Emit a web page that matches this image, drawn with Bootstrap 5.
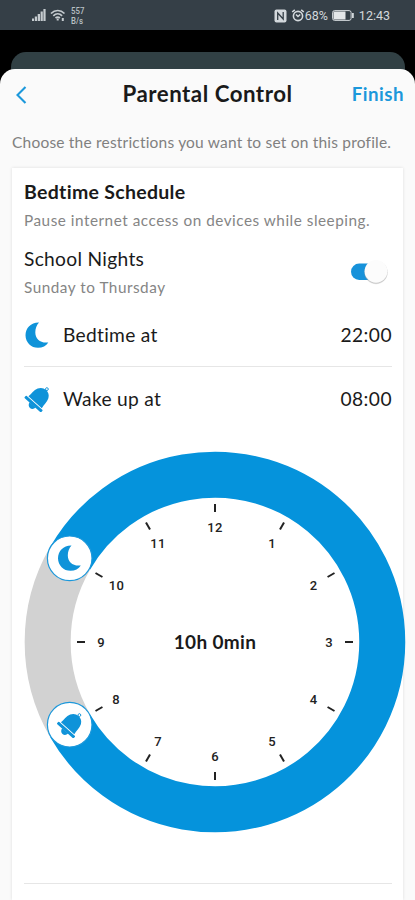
<!DOCTYPE html>
<html lang="en">
<head>
<meta charset="utf-8">
<meta name="viewport" content="width=device-width, initial-scale=1">
<title>Parental Control</title>
<link href="https://cdn.jsdelivr.net/npm/bootstrap@5.3.0/dist/css/bootstrap.min.css" rel="stylesheet">
<style>
  body { background: #000; font-family: Lato, "Open Sans", sans-serif; color: #1a1a1a; height: 900px; line-height: 1; }
  svg { display: block; flex: none; }
  .status-bar { height: 30px; background: #353f47; color: #d3d8dc; font: 12.5px Roboto, sans-serif; padding: 1px 25px 0 32px; }
  .net-rate { font: 500 8.5px/10px Roboto, sans-serif; margin-left: 5px; color: #b9c0c4; transform: scaleX(.92); transform-origin: left; }
  .sheet-behind { height: 32px; margin: 22px 10px 0 11px; background: #314044; border-radius: 15px 15px 0 0; }
  .sheet { height: 831px; margin-top: -15px; background: #fafafa; border-radius: 15px 15px 0 0; position: relative; }
  .sheet-head { height: 51px; padding: 0 11px 0 16px; }
  .sheet-title { font-size: 22.3px; font-weight: 700; letter-spacing: .5px; margin-left: -5px; }
  .finish { color: #1c98db; font-size: 18.7px; font-weight: 700; letter-spacing: .5px; }
  .side { width: 64px; }
  .intro { height: 48px; padding: 14px 0 0 12px; font-size: 15.5px; line-height: 16px; letter-spacing: .2px; color: #808080; white-space: nowrap; }
  .schedule { height: 732px; margin: 0 12px; padding: 12px 11px 0 12px; background: #fff; box-shadow: 0 0 3px rgba(0,0,0,.12); }
  .sched-title { font-size: 19.5px; line-height: 24px; font-weight: 700; letter-spacing: .3px; }
  .muted { color: #858585; font-size: 15.3px; letter-spacing: .52px; line-height: 18px; white-space: nowrap; }
  .pause { padding-top: 7px; }
  .nights { padding: 18px 0 8px; }
  .nights .toggle { margin-right: 4px; }
  .days { padding-top: 7px; }
  .label { font-size: 19.2px; letter-spacing: .3px; line-height: 24px; }
  .time { letter-spacing: .45px; }
  .toggle { width: 37px; height: 26px; overflow: visible; }
  .time-row { height: 63px; }
  .time-row .label:nth-child(2) { margin-left: 13px; }
  .line-b { border-bottom: 1px solid #e6e6e6; }
  .dial { width: 382px; height: 382px; margin-top: 21px; overflow: visible; }
  .hours text { font: 500 13px Roboto, sans-serif; text-anchor: middle; fill: #222; letter-spacing: .3px; }
  .total { font: 700 19px Lato, sans-serif; text-anchor: middle; fill: #1a1a1a; letter-spacing: .35px; }
  .end-line { height: 51px; }
</style>
</head>
<body class="overflow-hidden">
<svg width="0" height="0" class="position-absolute">
  <defs>
    <symbol id="moon" viewBox="0 0 24 26"><path d="M14 .500C6 .300.500 6 .500 13.200.500 20.300 6 25.800 13 25.800c4.500 0 8.200-2 10.300-5.400C15.500 21.500 10.300 16.800 10.300 10.200c0-3.800 1.400-7 3.700-9.700z" fill="#0f93d9"/></symbol>
    <symbol id="bell" viewBox="0 0 26 26"><g transform="translate(1 0) rotate(42 13 13)" fill="#0f93d9">
      <circle cx="13" cy="-.300" r="1.400" fill="none" stroke="#0f93d9" stroke-width=".900"/>
      <path d="M4 17.300C5 13.500 3.900 9.500 5.800 5.500 7.200 2.500 9.800 1 13 1s5.800 1.500 7.200 4.500c1.900 4 .8 8 1.800 11.800z"/>
      <rect x="1.800" y="18.200" width="22.400" height="3" rx=".800"/>
      <path d="M9 21h8c-.3 2.500-1.900 4-4 4s-3.700-1.500-4-4z"/>
    </g></symbol>
  </defs>
</svg>

<div class="status-bar d-flex align-items-center justify-content-between">
  <div class="d-flex align-items-center">
    <svg width="14" height="13" viewBox="0 0 14 13" fill="#c5cbcf"><path d="M0 9.500h2V12H0zM2.800 7.500H5V12H2.800zM5.700 5H8v7H5.700zM8.600 2.500h2.200V12H8.600zM11.400 0h2.200v12h-2.200z"/></svg>
    <svg width="16" height="13" viewBox="0 0 16 13" fill="none" stroke="#c5cbcf" stroke-width="1.700" class="ms-1"><path d="M1 4.500C5 .500 10.500.500 14.500 4.500M3.300 6.800c2.600-2.500 6.200-2.500 8.800 0M5.500 9c1.400-1.200 3-1.200 4.400 0"/><path d="M7.700 9.500v2M12.800 9v3" stroke-width="2"/></svg>
    <div class="net-rate">557<br>B/s</div>
  </div>
  <div class="d-flex align-items-center">
    <svg width="13" height="14" viewBox="0 0 13 14"><rect x=".500" y=".500" width="12" height="13" rx="2" fill="#d3d8dc"/><path d="M3.700 11V4l5.500 6V3" fill="none" stroke="#353f47" stroke-width="1.300"/></svg>
    <svg width="14" height="13" viewBox="0 0 13 13" fill="none" stroke="#d3d8dc" stroke-width="1.600" class="ms-1"><circle cx="6.500" cy="7" r="4.600"/><path d="M.700 3 3.300.800M12.300 3 9.700.800M4.500 5.500l2 2 2.200-2"/></svg>
    <span>68%</span>
    <svg width="23" height="11" viewBox="0 0 23 11" class="ms-1"><rect x=".600" y=".600" width="18.500" height="9.800" rx="2" fill="none" stroke="#d3d8dc"/><rect x="1.500" y="1.500" width="12" height="8" fill="#e3e6e8"/><path d="M20 3h1.800v5H20z" fill="#d3d8dc"/></svg>
    <span class="ms-1">12:43</span>
  </div>
</div>

<div class="sheet-behind"></div>
<main class="sheet">
  <header class="sheet-head d-flex align-items-center justify-content-between">
    <div class="side"><svg width="11" height="18" viewBox="0 0 11 18" fill="none" stroke="#1c98db" stroke-width="2.100"><path d="M9.500 1 1.500 9l8 8"/></svg></div>
    <div class="sheet-title">Parental Control</div>
    <div class="side finish d-flex justify-content-end">Finish</div>
  </header>
  <div class="intro">Choose the restrictions you want to set on this profile.</div>
  <section class="schedule">
    <div class="sched-title">Bedtime Schedule</div>
    <div class="muted pause">Pause internet access on devices while sleeping.</div>
    <div class="nights d-flex justify-content-between align-items-center">
      <div>
        <div class="label">School Nights</div>
        <div class="muted days">Sunday to Thursday</div>
      </div>
      <svg class="toggle" viewBox="0 0 37 26"><rect x="0" y="4.500" width="32" height="16.500" rx="8.200" fill="#1792da"/><circle cx="25" cy="13.600" r="11.700" fill="#aaa" opacity=".25"/><circle cx="25" cy="13.200" r="11.500" fill="#aaa" opacity=".5"/><circle cx="25" cy="12.300" r="11.400" fill="#fcfcfc"/></svg>
    </div>
    <div class="time-row line-b d-flex align-items-center">
      <svg width="26" height="26"><use href="#moon"/></svg>
      <span class="label">Bedtime at</span><span class="label time ms-auto">22:00</span>
    </div>
    <div class="time-row d-flex align-items-center">
      <svg width="26" height="26"><use href="#bell"/></svg>
      <span class="label">Wake up at</span><span class="label time ms-auto">08:00</span>
    </div>
    <svg class="dial" viewBox="-191 -191 382 382">
      <path d="M-144.900-83.700A167.300 167.300 0 1 1-144.900 83.700" fill="none" stroke="#0593dc" stroke-width="46"/>
      <path d="M-144.900-83.700A167.300 167.300 0 0 0-144.900 83.700" fill="none" stroke="#d2d2d2" stroke-width="46"/>
      <g stroke="#222" stroke-width="2">
        <path id="tick" d="M0-138v8"/>
        <use href="#tick" transform="rotate(30)"/><use href="#tick" transform="rotate(60)"/><use href="#tick" transform="rotate(90)"/>
        <use href="#tick" transform="rotate(120)"/><use href="#tick" transform="rotate(150)"/><use href="#tick" transform="rotate(180)"/>
        <use href="#tick" transform="rotate(210)"/><use href="#tick" transform="rotate(240)"/><use href="#tick" transform="rotate(270)"/>
        <use href="#tick" transform="rotate(300)"/><use href="#tick" transform="rotate(330)"/>
      </g>
      <g class="hours">
        <text x="0" y="-110">12</text><text x="57" y="-94">1</text><text x="98.500" y="-52.500">2</text><text x="114" y="5">3</text>
        <text x="98.500" y="62">4</text><text x="57" y="103.500">5</text><text x="0" y="119">6</text><text x="-57" y="103.500">7</text>
        <text x="-99" y="62">8</text><text x="-114" y="5">9</text><text x="-98.500" y="-52.500">10</text><text x="-57" y="-94">11</text>
      </g>
      <text class="total" x="0" y="6.500">10h 0min</text>
      <g fill="#fff" stroke="#1c98db" stroke-width="1.200"><circle cx="-145.300" cy="-83.700" r="22.300"/><circle cx="-145.300" cy="82.700" r="22.300"/></g>
      <use href="#moon" x="-157.500" y="-97" width="24" height="26"/>
      <use href="#bell" x="-158.500" y="70" width="26" height="26"/>
    </svg>
    <div class="line-b end-line"></div>
  </section>
</main>
<script src="https://cdn.jsdelivr.net/npm/bootstrap@5.3.0/dist/js/bootstrap.bundle.min.js"></script>
</body>
</html>
